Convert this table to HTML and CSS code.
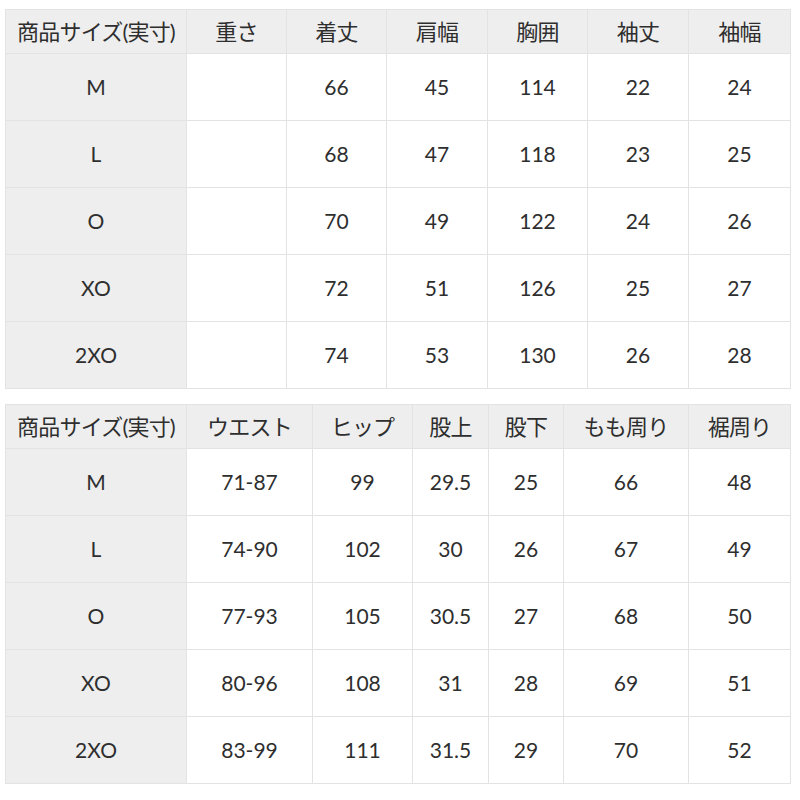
FILE: index.html
```html
<!DOCTYPE html>
<html lang="ja">
<head>
<meta charset="utf-8">
<link rel="stylesheet" href="styles.css">
</head>
<body>
<div class="page">
<table class="size t1">
  <colgroup>
    <col style="width:181px"><col style="width:100px"><col style="width:100px"><col style="width:101px"><col style="width:100px"><col style="width:101px"><col style="width:102px">
  </colgroup>
  <thead>
    <tr><th>商品サイズ(実寸)</th><th>重さ</th><th>着丈</th><th>肩幅</th><th>胸囲</th><th>袖丈</th><th>袖幅</th></tr>
  </thead>
  <tbody>
    <tr><th>M</th><td></td><td>66</td><td>45</td><td>114</td><td>22</td><td>24</td></tr>
    <tr><th>L</th><td></td><td>68</td><td>47</td><td>118</td><td>23</td><td>25</td></tr>
    <tr><th>O</th><td></td><td>70</td><td>49</td><td>122</td><td>24</td><td>26</td></tr>
    <tr><th>XO</th><td></td><td>72</td><td>51</td><td>126</td><td>25</td><td>27</td></tr>
    <tr><th>2XO</th><td></td><td>74</td><td>53</td><td>130</td><td>26</td><td>28</td></tr>
  </tbody>
</table>
<table class="size t2">
  <colgroup>
    <col style="width:181px"><col style="width:126px"><col style="width:100px"><col style="width:76px"><col style="width:75px"><col style="width:125px"><col style="width:102px">
  </colgroup>
  <thead>
    <tr><th>商品サイズ(実寸)</th><th>ウエスト</th><th>ヒップ</th><th>股上</th><th>股下</th><th>もも周り</th><th>裾周り</th></tr>
  </thead>
  <tbody>
    <tr><th>M</th><td>71-87</td><td>99</td><td>29.5</td><td>25</td><td>66</td><td>48</td></tr>
    <tr><th>L</th><td>74-90</td><td>102</td><td>30</td><td>26</td><td>67</td><td>49</td></tr>
    <tr><th>O</th><td>77-93</td><td>105</td><td>30.5</td><td>27</td><td>68</td><td>50</td></tr>
    <tr><th>XO</th><td>80-96</td><td>108</td><td>31</td><td>28</td><td>69</td><td>51</td></tr>
    <tr><th>2XO</th><td>83-99</td><td>111</td><td>31.5</td><td>29</td><td>70</td><td>52</td></tr>
  </tbody>
</table>
</div>
</body>
</html>
```
FILE: styles.css
```css
html, body {
  margin: 0;
  padding: 0;
  background: #ffffff;
}
.page {
  padding: 9px 10px 0 5px;
  display: flex;
  flex-direction: column;
  gap: 15px;
  font-family: "Lato", "Noto Sans CJK JP", sans-serif;
  color: #2e2e2e;
}
.size {
  border-collapse: collapse;
  table-layout: fixed;
  width: 786px;
  font-size: 21px;
}
.size th, .size td {
  border: 1px solid #e3e3e3;
  text-align: center;
  vertical-align: middle;
  font-weight: normal;
  padding: 0;
}
.size thead th {
  background: #eeeeee;
  height: 44px;
  font-size: 22px;
  letter-spacing: -0.8px;
  padding-bottom: 3px;
  box-sizing: border-box;
}
.size tbody tr {
  height: 67px;
}
.size tbody td, .size tbody th {
  padding-bottom: 2px;
}
.size tbody th {
  background: #eeeeee;
}
.size tbody td {
  background: #ffffff;
}
```
